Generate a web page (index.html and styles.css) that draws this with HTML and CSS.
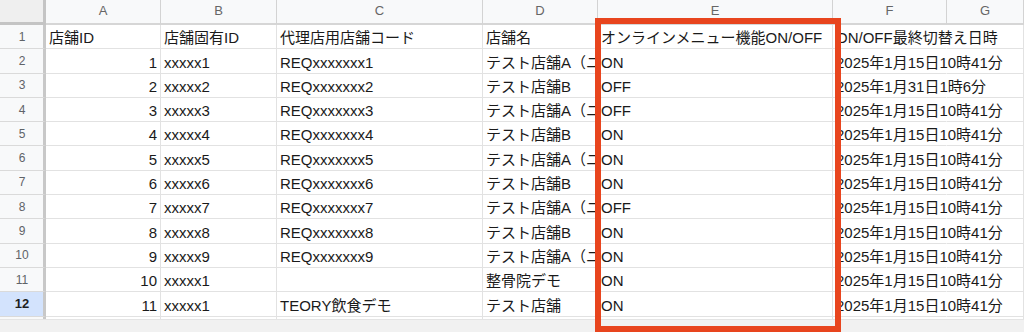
FILE: index.html
```html
<!DOCTYPE html>
<html lang="ja">
<head>
<meta charset="utf-8">
<title>Sheet</title>
<link rel="stylesheet" href="styles.css">
</head>
<body>
<div class="frame">
  <div class="viewport">
    <div class="sheet">
      <div class="corner"></div>
      <div class="colhdr">A</div><div class="colhdr">B</div><div class="colhdr">C</div><div class="colhdr">D</div><div class="colhdr">E</div><div class="colhdr">F</div><div class="colhdr">G</div>

      <div class="rowhdr">1</div><div class="c">店舗ID</div><div class="c">店舗固有ID</div><div class="c">代理店用店舗コード</div><div class="c">店舗名</div><div class="c">オンラインメニュー機能ON/OFF</div><div class="c spill">ON/OFF最終切替え日時</div><div class="c blank"></div>

      <div class="rowhdr">2</div><div class="c num">1</div><div class="c">xxxxx1</div><div class="c">REQxxxxxxx1</div><div class="c">テスト店舗A（ユーザー）</div><div class="c">ON</div><div class="c spill">2025年1月15日10時41分</div><div class="c blank"></div>

      <div class="rowhdr">3</div><div class="c num">2</div><div class="c">xxxxx2</div><div class="c">REQxxxxxxx2</div><div class="c">テスト店舗B</div><div class="c">OFF</div><div class="c spill">2025年1月31日1時6分</div><div class="c blank"></div>

      <div class="rowhdr">4</div><div class="c num">3</div><div class="c">xxxxx3</div><div class="c">REQxxxxxxx3</div><div class="c">テスト店舗A（ユーザー）</div><div class="c">OFF</div><div class="c spill">2025年1月15日10時41分</div><div class="c blank"></div>

      <div class="rowhdr">5</div><div class="c num">4</div><div class="c">xxxxx4</div><div class="c">REQxxxxxxx4</div><div class="c">テスト店舗B</div><div class="c">ON</div><div class="c spill">2025年1月15日10時41分</div><div class="c blank"></div>

      <div class="rowhdr">6</div><div class="c num">5</div><div class="c">xxxxx5</div><div class="c">REQxxxxxxx5</div><div class="c">テスト店舗A（ユーザー）</div><div class="c">ON</div><div class="c spill">2025年1月15日10時41分</div><div class="c blank"></div>

      <div class="rowhdr">7</div><div class="c num">6</div><div class="c">xxxxx6</div><div class="c">REQxxxxxxx6</div><div class="c">テスト店舗B</div><div class="c">ON</div><div class="c spill">2025年1月15日10時41分</div><div class="c blank"></div>

      <div class="rowhdr">8</div><div class="c num">7</div><div class="c">xxxxx7</div><div class="c">REQxxxxxxx7</div><div class="c">テスト店舗A（ユーザー）</div><div class="c">OFF</div><div class="c spill">2025年1月15日10時41分</div><div class="c blank"></div>

      <div class="rowhdr">9</div><div class="c num">8</div><div class="c">xxxxx8</div><div class="c">REQxxxxxxx8</div><div class="c">テスト店舗B</div><div class="c">ON</div><div class="c spill">2025年1月15日10時41分</div><div class="c blank"></div>

      <div class="rowhdr">10</div><div class="c num">9</div><div class="c">xxxxx9</div><div class="c">REQxxxxxxx9</div><div class="c">テスト店舗A（ユーザー）</div><div class="c">ON</div><div class="c spill">2025年1月15日10時41分</div><div class="c blank"></div>

      <div class="rowhdr">11</div><div class="c num">10</div><div class="c">xxxxx1</div><div class="c"></div><div class="c">整骨院デモ</div><div class="c">ON</div><div class="c spill">2025年1月15日10時41分</div><div class="c blank"></div>

      <div class="rowhdr sel">12</div><div class="c num">11</div><div class="c">xxxxx1</div><div class="c">TEORY飲食デモ</div><div class="c">テスト店舗</div><div class="c">ON</div><div class="c spill">2025年1月15日10時41分</div><div class="c blank"></div>

      <div class="rowhdr">13</div><div class="c num">12</div><div class="c">xxxxx1</div><div class="c"></div><div class="c">テスト1</div><div class="c">ON</div><div class="c spill">2025年1月15日10時41分</div><div class="c blank"></div>
    </div>
  </div>
  <div class="hscroll"></div>
  <div class="highlight"></div>
</div>
</body>
</html>
```

FILE: styles.css
```css
html, body {
  margin: 0;
  padding: 0;
  background: #ffffff;
  overflow: hidden;
}

.frame {
  position: relative;
  width: 1024px;
  height: 332px;
  display: flex;
  flex-direction: column;
  font-family: "Liberation Sans", "Noto Sans CJK JP", sans-serif;
}

.viewport {
  flex: 0 0 319px;
  overflow: hidden;
}

.sheet {
  display: grid;
  grid-template-columns: 46px 115px 116px 206px 115px 235px 114px 1fr;
  grid-template-rows: 25px;
  grid-auto-rows: 24.3px;
}

.corner {
  box-sizing: border-box;
  background: #efefef;
  border-right: 3px solid #c4c4c4;
  border-bottom: 3px solid #c4c4c4;
}

.colhdr {
  box-sizing: border-box;
  background: #f8f9fa;
  border-right: 1px solid #d3d3d3;
  border-bottom: 2px solid #d6d6d6;
  display: flex;
  align-items: center;
  justify-content: center;
  font-size: 13px;
  color: #666666;
  padding-bottom: 2px;
}

.rowhdr {
  box-sizing: border-box;
  background: #f8f9fa;
  border-right: 3px solid #c8c8c8;
  border-bottom: 1px solid #dadada;
  display: flex;
  align-items: center;
  justify-content: center;
  font-size: 12px;
  color: #5f6368;
  padding-left: 1px;
}

.rowhdr.sel {
  background: #d3e3fd;
  color: #1f1f1f;
  font-weight: bold;
  font-size: 13px;
}

.c {
  box-sizing: border-box;
  border-right: 1px solid #e2e2e2;
  border-bottom: 1px solid #e2e2e2;
  padding: 0 3px 1px 3px;
  display: flex;
  align-items: flex-end;
  white-space: nowrap;
  overflow: hidden;
  font-size: 15px;
  line-height: 18px;
  color: #1a1a1a;
}

.c.num {
  justify-content: flex-end;
}

.c.spill {
  overflow: visible;
  border-right-color: transparent;
  position: relative;
  z-index: 1;
}

.hscroll {
  flex: 1;
  background: #f1f1f1;
  border-top: 1px solid #e4e4e4;
}

.highlight {
  position: absolute;
  left: 595px;
  top: 18px;
  width: 246px;
  height: 314px;
  box-sizing: border-box;
  border: 6px solid #e8451e;
  pointer-events: none;
  z-index: 2;
}
```
